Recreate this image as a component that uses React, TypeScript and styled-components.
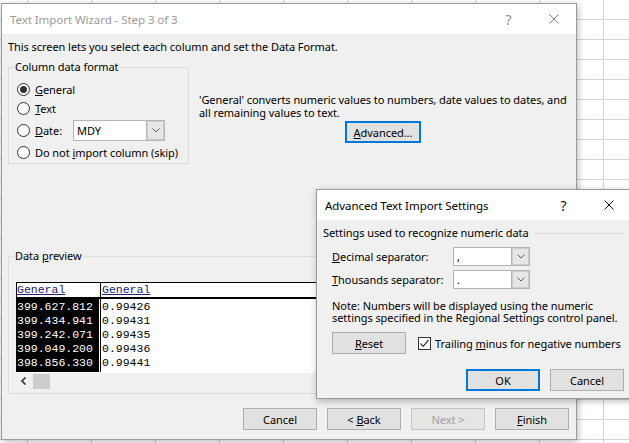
import React from "react";
import styled, { createGlobalStyle } from "styled-components";

const GlobalStyle = createGlobalStyle`
  html, body {
    margin: 0;
    padding: 0;
  }
  body {
    width: 629px;
    height: 443px;
    overflow: hidden;
    background-color: #ffffff;
    background-image:
      linear-gradient(to right, #d4d4d4 1px, transparent 1px),
      linear-gradient(to bottom, #d4d4d4 1px, transparent 1px);
    background-size: 64px 20px;
    background-position: 27px 19px;
    font-family: "Noto Sans", "Liberation Sans", Arial, sans-serif;
    font-size: 11px;
    letter-spacing: -0.06px;
    color: #000;
  }
`;

const Desktop = styled.div`
  position: relative;
  width: 629px;
  height: 443px;
  overflow: hidden;
`;

// dialogs sit on the spreadsheet like windows on a desktop
const Window = styled.div<{ $left: number; $top: number; $width: number; $height: number }>`
  position: absolute;
  left: ${(p) => p.$left}px;
  top: ${(p) => p.$top}px;
  width: ${(p) => p.$width}px;
  height: ${(p) => p.$height}px;
  box-sizing: border-box;
  display: flex;
  flex-direction: column;
  background: #f0f0f0;
  border: 1px solid #9a9a9a;
  box-shadow: 1px 2px 7px rgba(0, 0, 0, 0.28);
`;

const TitleBar = styled.div`
  height: 30px;
  flex: none;
  display: flex;
  align-items: center;
  background: #ffffff;
  padding-left: 8px;
`;

const Title = styled.div<{ $inactive?: boolean }>`
  flex: 1;
  font-size: 11.5px;
  color: ${(p) => (p.$inactive ? "#9b9b9b" : "#000")};
  white-space: nowrap;
`;

const CaptionButton = styled.div<{ $inactive?: boolean }>`
  width: 45px;
  height: 30px;
  display: flex;
  align-items: center;
  justify-content: center;
  color: ${(p) => (p.$inactive ? "#8a8a8a" : "#111")};
  font-size: 14px;
`;

const MainBody = styled.div`
  flex: 1;
  display: flex;
  flex-direction: column;
  padding: 6px 7px 0 6px;
`;

const Intro = styled.div`
  line-height: 14px;
  white-space: nowrap;
`;

const TopRow = styled.div`
  display: flex;
  align-items: flex-start;
  margin-top: 6px;
`;

const GroupBox = styled.fieldset<{ $width?: number }>`
  margin: 0;
  min-width: 0;
  box-sizing: border-box;
  width: ${(p) => (p.$width ? `${p.$width}px` : "auto")};
  border: 1px solid #dcdcdc;
  padding: 8px 8px 4px 8px;
`;

const Legend = styled.legend<{ $shift: number }>`
  margin-left: ${(p) => p.$shift}px;
  padding: 0 1px;
  line-height: 14px;
`;

const RadioList = styled.div`
  display: flex;
  flex-direction: column;
  gap: 5px;
`;

const RadioRow = styled.div<{ $tall?: boolean }>`
  display: flex;
  align-items: center;
  height: ${(p) => (p.$tall ? 20 : 14)}px;
  white-space: nowrap;
`;

const RadioMark = styled.span<{ $checked?: boolean }>`
  width: 13px;
  height: 13px;
  box-sizing: border-box;
  border: 1px solid #333;
  border-radius: 50%;
  background: #fff;
  margin-right: 5px;
  display: flex;
  align-items: center;
  justify-content: center;
  flex: none;
  &::after {
    content: "";
    width: 7px;
    height: 7px;
    border-radius: 50%;
    background: ${(p) => (p.$checked ? "#333" : "transparent")};
  }
`;

const DateLabel = styled.span`
  width: 38px;
`;

const Combo = styled.div<{ $width: number; $height: number }>`
  width: ${(p) => p.$width}px;
  height: ${(p) => p.$height}px;
  box-sizing: border-box;
  display: flex;
  border: 1px solid #b4b4b4;
  background: #fff;
`;

const ComboValue = styled.div`
  flex: 1;
  display: flex;
  align-items: center;
  padding-left: 3px;
`;

const ComboButton = styled.div`
  width: 17px;
  background: #e6e6e6;
  border-left: 1px solid #b4b4b4;
  box-shadow: inset 0 0 0 1px #cdcdcd;
  display: flex;
  align-items: center;
  justify-content: center;
`;

const RightCol = styled.div`
  display: flex;
  flex-direction: column;
  margin-left: 10px;
  padding-top: 33px;
  width: 368px;
`;

const Description = styled.div`
  line-height: 13px;
  white-space: nowrap;
`;

const Button = styled.button<{ $width?: number; $primary?: boolean }>`
  width: ${(p) => p.$width ?? 74}px;
  height: 22px;
  box-sizing: border-box;
  padding: 0;
  font: inherit;
  letter-spacing: inherit;
  background: #e1e1e1;
  border: ${(p) => (p.$primary ? "2px solid #0078d7" : "1px solid #adadad")};
  color: #000;
  &:disabled {
    color: #a0a0a0;
    border-color: #c4c4c4;
    background: #e5e5e5;
  }
`;

const AdvancedButton = styled(Button)`
  margin-top: 2px;
  align-self: center;
`;

const PreviewGroup = styled(GroupBox)`
  margin-top: 85px;
  padding: 19px 8px 4px 7px;
`;

const PreviewTable = styled.div`
  display: flex;
  background: #fff;
  height: 91px;
`;

const PreviewColumn = styled.div<{ $width?: number }>`
  display: flex;
  flex-direction: column;
  width: ${(p) => (p.$width ? `${p.$width}px` : "auto")};
  flex: ${(p) => (p.$width ? "none" : "1")};
  font-family: "Liberation Mono", "Courier New", monospace;
  font-size: 11.5px;
  letter-spacing: 0;
`;

const HeaderCell = styled.div<{ $first?: boolean }>`
  height: 14px;
  line-height: 14px;
  border-top: 1px solid #000;
  border-bottom: 2px solid #000;
  border-left: 1px solid #000;
  color: #22226e;
  padding-left: ${(p) => (p.$first ? 0 : 1)}px;
  text-decoration: underline;
`;

const CellStack = styled.div<{ $selected?: boolean }>`
  display: flex;
  flex-direction: column;
  padding: 1px 0 2px 1px;
  margin-right: ${(p) => (p.$selected ? 1 : 0)}px;
  border-left: ${(p) => (p.$selected ? "none" : "1px solid #000")};
  background: ${(p) => (p.$selected ? "#000" : "#fff")};
  color: ${(p) => (p.$selected ? "#fff" : "#000")};
`;

const Cell = styled.div`
  height: 14px;
  line-height: 14px;
  white-space: nowrap;
`;

const ScrollBar = styled.div`
  height: 16px;
  display: flex;
  align-items: center;
`;

const ScrollArrow = styled.div`
  width: 16px;
  height: 16px;
  display: flex;
  align-items: center;
  justify-content: center;
`;

const ScrollThumb = styled.div`
  width: 17px;
  height: 15px;
  margin-left: 1px;
  background: #cdcdcd;
`;

const ButtonRow = styled.div<{ $top: number }>`
  display: flex;
  justify-content: flex-end;
  gap: 10px;
  margin-top: ${(p) => p.$top}px;
`;

const AdvBody = styled.div`
  flex: 1;
  display: flex;
  flex-direction: column;
  padding: 6px 7px 7px 6px;
`;

const SectionHeader = styled.div`
  display: flex;
  align-items: center;
  line-height: 14px;
  white-space: nowrap;
`;

const Rule = styled.div`
  flex: 1;
  height: 1px;
  background: #dcdcdc;
  margin-left: 6px;
`;

const FieldList = styled.div`
  display: flex;
  flex-direction: column;
  gap: 4px;
  margin-top: 7px;
  padding-left: 9px;
`;

const FieldRow = styled.div`
  display: flex;
  align-items: center;
`;

const FieldLabel = styled.span`
  width: 121px;
  white-space: nowrap;
`;

const Note = styled.div`
  margin-top: 11px;
  padding-left: 9px;
  line-height: 12px;
  white-space: nowrap;
`;

const ActionRow = styled.div`
  display: flex;
  align-items: center;
  margin-top: 8px;
  padding-left: 9px;
`;

const CheckBox = styled.span`
  width: 13px;
  height: 13px;
  box-sizing: border-box;
  border: 1px solid #333;
  background: #fff;
  margin-left: 12px;
  margin-right: 4px;
  display: flex;
  align-items: center;
  justify-content: center;
`;

const CheckLabel = styled.span`
  white-space: nowrap;
`;

const CloseGlyph = () => (
  <svg width="10" height="10" viewBox="0 0 10 10">
    <path d="M0.5 0.5 L9.5 9.5 M9.5 0.5 L0.5 9.5" stroke="currentColor" strokeWidth="1" fill="none" />
  </svg>
);

const Chevron = () => (
  <svg width="8" height="5" viewBox="0 0 8 5">
    <path d="M0.5 0.5 L4 4 L7.5 0.5" stroke="#606060" strokeWidth="1" fill="none" />
  </svg>
);

const LeftArrow = () => (
  <svg width="6" height="8" viewBox="0 0 6 8">
    <path d="M4.5 0.5 L1 4 L4.5 7.5" stroke="#333" strokeWidth="1.6" fill="none" />
  </svg>
);

const Tick = () => (
  <svg width="11" height="11" viewBox="0 0 11 11">
    <path d="M1.5 5.5 L4.2 8.3 L9.5 2" stroke="#333" strokeWidth="1.2" fill="none" />
  </svg>
);

const preview = [
  ["399.627.812", "0.99426"],
  ["399.434.941", "0.99431"],
  ["399.242.071", "0.99435"],
  ["399.049.200", "0.99436"],
  ["398.856.330", "0.99441"],
];

function App() {
  return (
    <Desktop>
      <GlobalStyle />
      <Window $left={1} $top={3} $width={576} $height={437}>
        <TitleBar>
          <Title $inactive>Text Import Wizard - Step 3 of 3</Title>
          <CaptionButton $inactive>?</CaptionButton>
          <CaptionButton $inactive>
            <CloseGlyph />
          </CaptionButton>
        </TitleBar>
        <MainBody>
          <Intro>This screen lets you select each column and set the Data Format.</Intro>
          <TopRow>
            <GroupBox $width={181}>
              <Legend $shift={-3}>Column data format</Legend>
              <RadioList>
                <RadioRow>
                  <RadioMark $checked />
                  <span>
                    <u>G</u>eneral
                  </span>
                </RadioRow>
                <RadioRow>
                  <RadioMark />
                  <span>
                    <u>T</u>ext
                  </span>
                </RadioRow>
                <RadioRow $tall>
                  <RadioMark />
                  <DateLabel>
                    <u>D</u>ate:
                  </DateLabel>
                  <Combo $width={92} $height={21}>
                    <ComboValue>MDY</ComboValue>
                    <ComboButton>
                      <Chevron />
                    </ComboButton>
                  </Combo>
                </RadioRow>
                <RadioRow>
                  <RadioMark />
                  <span>
                    Do not <u>i</u>mport column (skip)
                  </span>
                </RadioRow>
              </RadioList>
            </GroupBox>
            <RightCol>
              <Description>
                'General' converts numeric values to numbers, date values to dates, and
                <br />
                all remaining values to text.
              </Description>
              <AdvancedButton $width={76} $primary>
                <u>A</u>dvanced...
              </AdvancedButton>
            </RightCol>
          </TopRow>
          <PreviewGroup>
            <Legend $shift={-2}>
              Data <u>p</u>review
            </Legend>
            <PreviewTable>
              <PreviewColumn $width={84}>
                <HeaderCell $first>General</HeaderCell>
                <CellStack $selected>
                  {preview.map((r) => (
                    <Cell key={r[0]}>{r[0]}</Cell>
                  ))}
                </CellStack>
              </PreviewColumn>
              <PreviewColumn>
                <HeaderCell>General</HeaderCell>
                <CellStack>
                  {preview.map((r) => (
                    <Cell key={r[1]}>{r[1]}</Cell>
                  ))}
                </CellStack>
              </PreviewColumn>
            </PreviewTable>
            <ScrollBar>
              <ScrollArrow>
                <LeftArrow />
              </ScrollArrow>
              <ScrollThumb />
            </ScrollBar>
          </PreviewGroup>
          <ButtonRow $top={14}>
            <Button>Cancel</Button>
            <Button>
              &lt; <u>B</u>ack
            </Button>
            <Button disabled>Next &gt;</Button>
            <Button>
              <u>F</u>inish
            </Button>
          </ButtonRow>
        </MainBody>
      </Window>

      <Window $left={316} $top={189} $width={316} $height={210}>
        <TitleBar>
          <Title>Advanced Text Import Settings</Title>
          <CaptionButton>?</CaptionButton>
          <CaptionButton>
            <CloseGlyph />
          </CaptionButton>
        </TitleBar>
        <AdvBody>
          <SectionHeader>
            Settings used to recognize numeric data
            <Rule />
          </SectionHeader>
          <FieldList>
            <FieldRow>
              <FieldLabel>
                <u>D</u>ecimal separator:
              </FieldLabel>
              <Combo $width={77} $height={19}>
                <ComboValue>,</ComboValue>
                <ComboButton>
                  <Chevron />
                </ComboButton>
              </Combo>
            </FieldRow>
            <FieldRow>
              <FieldLabel>
                <u>T</u>housands separator:
              </FieldLabel>
              <Combo $width={77} $height={19}>
                <ComboValue>.</ComboValue>
                <ComboButton>
                  <Chevron />
                </ComboButton>
              </Combo>
            </FieldRow>
          </FieldList>
          <Note>
            Note: Numbers will be displayed using the numeric
            <br />
            settings specified in the Regional Settings control panel.
          </Note>
          <ActionRow>
            <Button>
              <u>R</u>eset
            </Button>
            <CheckBox>
              <Tick />
            </CheckBox>
            <CheckLabel>
              Trailing <u>m</u>inus for negative numbers
            </CheckLabel>
          </ActionRow>
          <ButtonRow $top={15}>
            <Button $primary>OK</Button>
            <Button>Cancel</Button>
          </ButtonRow>
        </AdvBody>
      </Window>
    </Desktop>
  );
}

export default App;
